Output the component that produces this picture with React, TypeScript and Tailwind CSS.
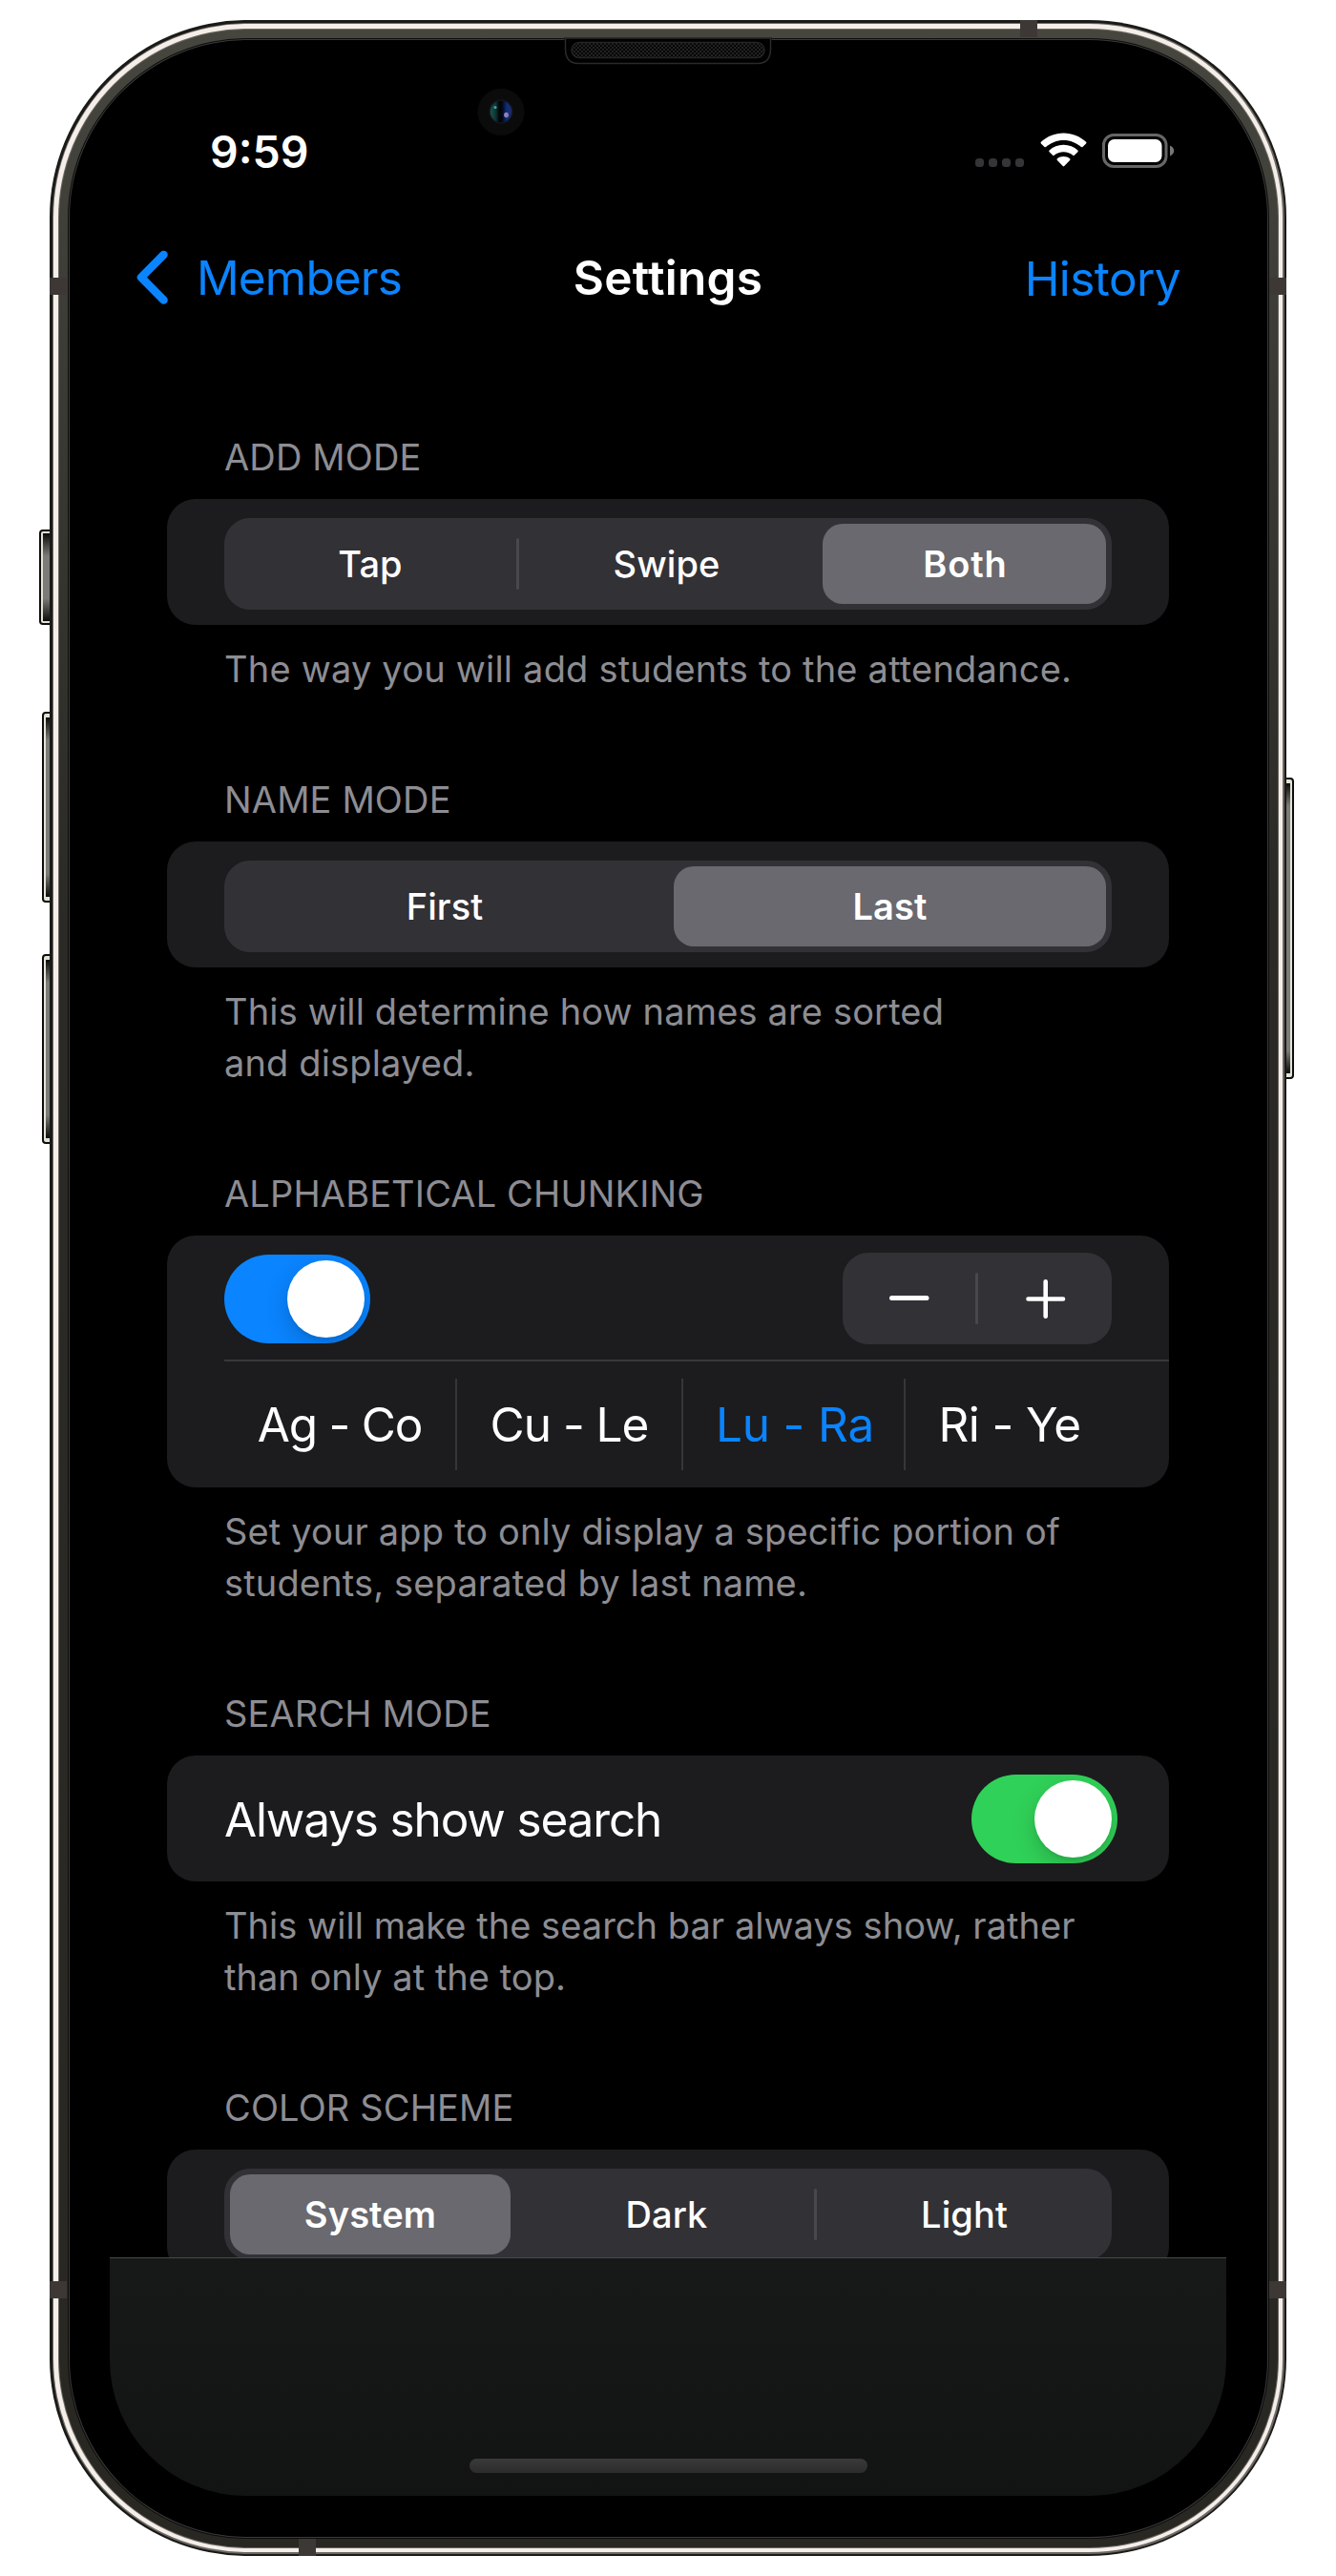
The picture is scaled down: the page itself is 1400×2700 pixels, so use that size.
import React from "react";

type SegmentedProps = {
  options: string[];
  selected: number;
  columns: string;
  dividerAfter?: number;
};

function Segmented({ options, selected, columns, dividerAfter }: SegmentedProps) {
  return (
    <div className={`mx-[60px] grid h-24 rounded-[27px] bg-[#323136] ${columns}`}>
      {options.map((label, i) => {
        const last = i === options.length - 1;
        const active = i === selected;
        return (
          <div key={label} className="flex h-24 items-center">
            <button
              className={`mx-[6px] flex h-[84px] flex-1 items-center justify-center rounded-[21px] text-[38px] leading-none text-white ${
                active ? "bg-[#69696f] font-semibold" : "font-medium"
              } ${label === "Both" ? "pl-[2px] tracking-[0.9px]" : "tracking-[0.1px]"}`}
            >
              {label}
            </button>
            {!last && (
              <span className={`h-[54px] w-[3px] rounded-full ${dividerAfter === i ? "bg-[#49494d]" : ""}`} />
            )}
          </div>
        );
      })}
    </div>
  );
}

type SectionProps = {
  title: string;
  footer?: string[];
  footerTracking?: string;
  cardClass: string;
  children: React.ReactNode;
};

function Section({ title, footer, footerTracking = "tracking-[0.15px]", cardClass, children }: SectionProps) {
  return (
    <section className="mx-[60px]">
      <h2 className="mb-[17px] pl-[60px] text-[38px] leading-[54px] tracking-[0.14px] text-[#8d8d93]">{title}</h2>
      <div className={`rounded-[30px] bg-[#1c1c1e] ${cardClass}`}>{children}</div>
      {footer && (
        <p className={`mt-[19px] mb-[83px] pl-[60px] text-[38px] leading-[54px] whitespace-nowrap text-[#8d8d93] ${footerTracking}`}>
          {footer.map((line) => (
            <span key={line} className="block">
              {line}
            </span>
          ))}
        </p>
      )}
    </section>
  );
}

function Toggle({ color }: { color: string }) {
  return (
    <div className={`flex h-[93px] w-[153px] items-center justify-end overflow-hidden rounded-full p-[6px] ${color}`}>
      <div className="size-[81px] rounded-full bg-white shadow-[0_9px_24px_rgba(0,0,0,0.18),0_3px_3px_rgba(0,0,0,0.06)]" />
    </div>
  );
}

function StatusBar() {
  return (
    <div className="flex h-[141px] items-start justify-between pr-[54px] pl-[105px]">
      <span className="pt-[47px] text-[46.5px] leading-[56px] font-semibold text-white">9:59</span>
      <div className="flex pt-[55px]">
        <div className="mt-[27px] mr-[17px] flex gap-[5px]">
          <i className="size-[9px] rounded-[3.5px] bg-[#353537]" />
          <i className="size-[9px] rounded-[3.5px] bg-[#353537]" />
          <i className="size-[9px] rounded-[3.5px] bg-[#353537]" />
          <i className="size-[9px] rounded-[3.5px] bg-[#353537]" />
        </div>
        <svg width="49" height="37" viewBox="0 0 49 37" className="mr-4" fill="#fff">
          <path d="M24.5 0.5 C33.6 .5 41.9 4 48.1 9.8 q.8.8 0 1.6 L44.5 15 q-.7.7-1.5 0 C38 10.600 31.600 7.900 24.500 7.900 S11 10.600 6 15 q-.8.7-1.500 0 L.9 11.400 q-.8-.8 0-1.600 C7.100 4 15.400.5 24.500.5Z" />
          <path d="M24.500 12.800 C30.200 12.800 35.400 14.900 39.400 18.500 q.9.800 0 1.700 L35.800 23.800 q-.7.700-1.500 0 C31.700 21.500 28.200 20.200 24.500 20.200 S17.300 21.500 14.700 23.800 q-.8.700-1.500 0 L9.600 20.200 q-.9-.9 0-1.700 C13.600 14.900 18.800 12.800 24.500 12.800Z" />
          <path d="M24.500 25 C27.200 25 29.300 25.900 31.100 27.300 q1 .8 0 1.700 L25.300 35 q-.8.800-1.600 0 L17.900 29 q-1-.9 0-1.700 C19.700 25.900 21.800 25 24.500 25Z" />
        </svg>
        <svg width="76" height="37" viewBox="0 0 76 37">
          <rect x="1.500" y="2.500" width="65.500" height="33" rx="10.500" fill="none" stroke="#666" strokeWidth="3" />
          <rect x="6" y="7" width="56.500" height="24" rx="6.500" fill="#fff" />
          <path d="M71 13.800 C73.600 14.700 75.200 16.700 75.200 19.100 S73.600 23.500 71 24.400Z" fill="#777" />
        </svg>
      </div>
    </div>
  );
}

function NavBar() {
  return (
    <div className="grid h-[132px] grid-cols-3 items-center pr-12 pl-[27px] text-[49.5px] leading-[60px]">
      <div className="flex items-center gap-[28px] tracking-[-0.85px] text-[#0a84ff]">
        <svg width="36" height="60" viewBox="0 0 36 60" fill="none">
          <path d="M29.500 6 L6 29.800 L29.500 53.600" stroke="#0a84ff" strokeWidth="8.500" strokeLinecap="round" strokeLinejoin="round" />
        </svg>
        Members
      </div>
      <h1 className="pl-[21px] text-center font-semibold tracking-[0.28px] text-white">Settings</h1>
      <div className="pt-[2px] text-right tracking-[-0.6px] text-[#0a84ff]">History</div>
    </div>
  );
}

function Chunks() {
  return (
    <div className="ml-[60px] grid h-[133px] grid-cols-[244px_237px_233px_216px] items-center border-t-2 border-[#38383b] text-[49.5px] leading-[60px] text-white">
      <div className="flex h-24 items-center justify-center border-r-2 border-[#363639] pt-px tracking-[-1.2px]">Ag - Co</div>
      <div className="flex h-24 items-center justify-center border-r-2 border-[#363639] pt-px tracking-[-1px]">Cu - Le</div>
      <div className="flex h-24 items-center justify-center border-r-2 border-[#363639] pt-px pl-[3px] tracking-[-0.15px] text-[#0a84ff]">
        Lu - Ra
      </div>
      <div className="flex h-24 items-center justify-center pt-px pl-[2px] tracking-[-0.6px]">Ri - Ye</div>
    </div>
  );
}

function Screen() {
  return (
    <div className="flex h-[2532px] w-[1170px] flex-col overflow-hidden rounded-[143px] bg-black">
      <StatusBar />
      <NavBar />
      <div className="h-[2009px] shrink-0 overflow-hidden pt-[95px]">
        <Section
          title="ADD MODE"
          cardClass="h-[132px] pt-5"
          footerTracking="tracking-[0.2px]"
          footer={["The way you will add students to the attendance."]}
        >
          <Segmented options={["Tap", "Swipe", "Both"]} selected={2} columns="grid-cols-[309px_312px_309px]" dividerAfter={0} />
        </Section>
        <Section
          title="NAME MODE"
          cardClass="h-[132px] pt-5"
          footer={["This will determine how names are sorted", "and displayed."]}
        >
          <Segmented options={["First", "Last"]} selected={1} columns="grid-cols-[465px_465px]" />
        </Section>
        <Section
          title="ALPHABETICAL CHUNKING"
          cardClass="h-[264px]"
          footer={["Set your app to only display a specific portion of", "students, separated by last name."]}
        >
          <div className="flex h-[130px] items-start justify-between px-[60px]">
            <div className="pt-5">
              <Toggle color="bg-[#0a84ff]" />
            </div>
            <div className="mt-[18px] flex h-24 w-[282px] items-center rounded-[27px] bg-[#323136]">
              <svg width="139" height="96" viewBox="0 0 139 96">
                <path d="M51.500 47.500 H88" stroke="#fff" strokeWidth="5" strokeLinecap="round" />
              </svg>
              <span className="h-[54px] w-[3px] rounded-full bg-[#49494d]" />
              <svg width="140" height="96" viewBox="0 0 140 96">
                <path d="M52.500 48.500 H89 M70.700 30.300 V66.700" stroke="#fff" strokeWidth="4.600" strokeLinecap="round" />
              </svg>
            </div>
          </div>
          <Chunks />
        </Section>
        <Section
          title="SEARCH MODE"
          cardClass="h-[132px]"
          footerTracking="tracking-[0.03px]"
          footer={["This will make the search bar always show, rather", "than only at the top."]}
        >
          <div className="flex h-[132px] items-center justify-between pr-[54px] pl-[60px] text-[49.5px] leading-[60px] tracking-[-1.15px] text-white">
            <span className="pt-[2px]">Always show search</span>
            <Toggle color="bg-[#30d158]" />
          </div>
        </Section>
        <Section title="COLOR SCHEME" cardClass="h-[132px] pt-5">
          <Segmented options={["System", "Dark", "Light"]} selected={0} columns="grid-cols-[309px_312px_309px]" dividerAfter={1} />
        </Section>
      </div>
      <div className="flex h-[250px] shrink-0 items-end justify-center border-t border-[#48484a] bg-linear-to-b from-[#171918] to-[#121413] pb-6">
        <div className="h-[15px] w-[417px] rounded-full bg-linear-to-b from-[#3a3a3a] to-[#2c2c2c]" />
      </div>
    </div>
  );
}

function Earpiece() {
  return (
    <svg width="218" height="30" viewBox="0 0 218 30" className="absolute top-[39px] left-[591px]">
      <defs>
        <pattern id="mesh" width="4" height="4" patternUnits="userSpaceOnUse">
          <rect width="4" height="4" fill="#060606" />
          <rect width="2" height="2" fill="#222" />
          <rect x="2" y="2" width="2" height="2" fill="#222" />
        </pattern>
      </defs>
      <path d="M0 .5 H218 V3 H0Z" fill="#151513" />
      <path d="M1.500 1 V12 Q1.500 27.500 15 27.500 H203 Q216.500 27.500 216.500 12 V1Z" fill="#000" stroke="#2a2a2a" strokeWidth="1.500" />
      <rect x="8" y="5.500" width="202" height="16" rx="8" fill="url(#mesh)" stroke="#242424" strokeWidth="1.500" />
    </svg>
  );
}

function Camera() {
  return (
    <svg width="50" height="50" viewBox="0 0 50 50" className="absolute top-[92px] left-[500px]">
      <defs>
        <linearGradient id="lens" x1="0" x2="1">
          <stop offset="0" stopColor="#1a5a50" />
          <stop offset=".28" stopColor="#0c332f" />
          <stop offset=".42" stopColor="#020407" />
          <stop offset=".55" stopColor="#030714" />
          <stop offset=".75" stopColor="#0b2f78" />
          <stop offset="1" stopColor="#2a2566" />
        </linearGradient>
      </defs>
      <circle cx="25" cy="25.300" r="24.500" fill="#0b0b0b" />
      <circle cx="25" cy="25" r="12" fill="url(#lens)" stroke="#15151c" strokeWidth="1.500" />
      <circle cx="19" cy="20.500" r="1.500" fill="#4fa0a8" />
      <ellipse cx="30.500" cy="28.500" rx="2.400" ry="2.800" fill="#8d80b8" />
    </svg>
  );
}

function SideButton({ place }: { place: string }) {
  return (
    <div className={`absolute border-[2px] border-[#0d0d0b] bg-[#e4e1d6] ${place}`}>
      <div className="h-full bg-[linear-gradient(to_bottom,#0c0c0a,#7b7b77_24px,#7b7b77_calc(100%-24px),#0c0c0a)]" />
    </div>
  );
}

function Band({ place }: { place: string }) {
  return <div className={`absolute bg-[#3d3835] ${place}`} />;
}

export default function App() {
  return (
    <div className="relative h-[2700px] w-[1400px] overflow-hidden bg-white px-[52px] pt-[21px] font-['Inter',sans-serif]">
      <SideButton place="top-[555px] left-[41px] h-[100px] w-[14px] rounded-l-[4px] py-[2px] pl-[2px]" />
      <SideButton place="top-[746px] left-[44px] h-[200px] w-[11px] rounded-l-[4px] py-[4px] pl-[2px]" />
      <SideButton place="top-[1000px] left-[44px] h-[199px] w-[11px] rounded-l-[4px] py-[4px] pl-[2px]" />
      <SideButton place="top-[815px] left-[1344px] h-[316px] w-[12px] rounded-r-[4px] py-[4px] pr-[2px]" />
      <div className="relative h-[2658px] w-[1296px] rounded-[207px] bg-[#1a1a18] p-[2.500px]">
        <div className="h-full rounded-[204.500px] bg-[#6a6864] p-[1.500px]">
          <div className="h-full rounded-[203px] bg-[#f5eee8] p-[4.500px]">
            <div className="h-full rounded-[198.500px] bg-[#6a6864] p-[1px]">
              <div className="h-full rounded-[197.500px] bg-linear-to-b from-[#46463f] via-[#2b2a26] via-35% to-[#282722] p-[9px]">
                <div className="h-full rounded-[188.500px] bg-[#0c0c0c] p-[1px]">
                  <div className="h-full rounded-[187.500px] bg-[#3a3a3c] p-[1px]">
                    <div className="flex h-full items-center justify-center rounded-[186.500px] bg-black">
                      <Screen />
                    </div>
                  </div>
                </div>
              </div>
            </div>
          </div>
        </div>
      </div>
      <Band place="top-[291px] left-[52px] h-[18px] w-[18px]" />
      <Band place="top-[291px] left-[1330px] h-[18px] w-[18px]" />
      <Band place="top-[2391px] left-[52px] h-[18px] w-[18px]" />
      <Band place="top-[2391px] left-[1330px] h-[18px] w-[18px]" />
      <Band place="top-[21px] left-[1069px] h-[18px] w-[18px]" />
      <Band place="top-[2661px] left-[313px] h-[18px] w-[18px]" />
      <Earpiece />
      <Camera />
    </div>
  );
}
